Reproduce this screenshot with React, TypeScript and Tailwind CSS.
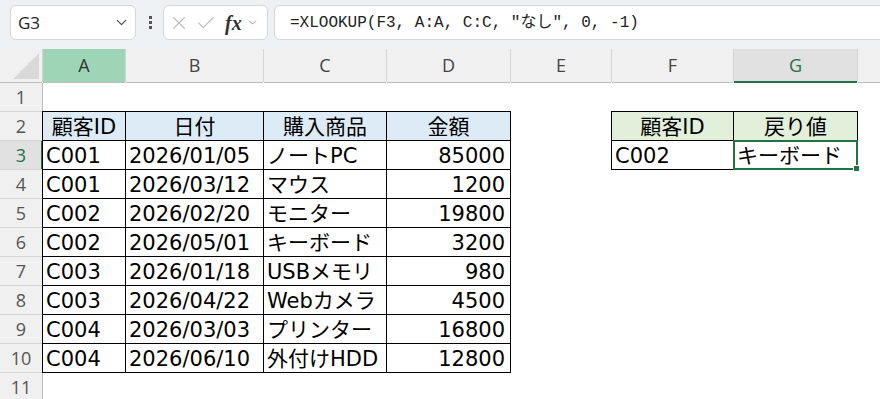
import { ChevronDown, X, Check } from "lucide-react";

type Cell = {
  v: string;
  align?: "l" | "r" | "c";
  head?: "blue" | "green";
  table?: boolean;
};

const cols = ["A", "B", "C", "D", "E", "F", "G", "H"];

const leftRows = [
  ["C001", "2026/01/05", "ノートPC", "85000"],
  ["C001", "2026/03/12", "マウス", "1200"],
  ["C002", "2026/02/20", "モニター", "19800"],
  ["C002", "2026/05/01", "キーボード", "3200"],
  ["C003", "2026/01/18", "USBメモリ", "980"],
  ["C003", "2026/04/22", "Webカメラ", "4500"],
  ["C004", "2026/03/03", "プリンター", "16800"],
  ["C004", "2026/06/10", "外付けHDD", "12800"],
];

function buildCells() {
  const cells: Record<string, Cell> = {};
  ["顧客ID", "日付", "購入商品", "金額"].forEach((h, i) => {
    cells[cols[i] + "2"] = { v: h, align: "c", head: "blue", table: true };
  });
  leftRows.forEach((r, ri) => {
    r.forEach((v, ci) => {
      cells[cols[ci] + (ri + 3)] = { v, align: ci === 3 ? "r" : "l", table: true };
    });
  });
  cells["F2"] = { v: "顧客ID", align: "c", head: "green", table: true };
  cells["G2"] = { v: "戻り値", align: "c", head: "green", table: true };
  cells["F3"] = { v: "C002", align: "l", table: true };
  cells["G3"] = { v: "キーボード", align: "l", table: true };
  return cells;
}

const cells = buildCells();

function TopBar() {
  return (
    <div className="flex items-start h-[49px] pt-[5px] pl-[10px] bg-[#edf1f4] overflow-hidden">
      <div className="flex items-center justify-between w-[126px] h-[35px] bg-white border border-[#d6d6d6] rounded-[6px] pl-[7px] pr-[5px]">
        <span className="text-[17px] text-[#242424] font-['Open_Sans',sans-serif]">G3</span>
        <ChevronDown size={17} strokeWidth={1.6} className="text-[#444]" />
      </div>
      <div className="flex flex-col items-center justify-center gap-[2px] w-[10px] h-[35px] ml-[9px]">
        <div className="w-[3px] h-[3px] bg-[#555]" />
        <div className="w-[3px] h-[3px] bg-[#555]" />
        <div className="w-[3px] h-[3px] bg-[#555]" />
      </div>
      <div className="flex items-center w-[105px] h-[35px] ml-[8px] bg-white border border-[#d6d6d6] rounded-[6px] pl-[4px]">
        <X size={22} strokeWidth={1.2} className="text-[#bdbdbd]" />
        <Check size={22} strokeWidth={1.2} className="text-[#bdbdbd] ml-[5px]" />
        <span className="ml-[8px] italic font-bold text-[20px] text-[#333] font-['Liberation_Serif',serif] leading-none">fx</span>
        <ChevronDown size={13} strokeWidth={1.5} className="text-[#888] ml-[4px]" />
      </div>
      <div className="flex items-center flex-1 h-[35px] ml-[6px] -mr-[20px] bg-white border border-[#d6d6d6] rounded-[6px] pl-[15px]">
        <span className="text-[16px] text-[#222] font-['Liberation_Mono','Noto_Sans_CJK_JP',monospace] whitespace-pre">
          =XLOOKUP(F3, A:A, C:C, "なし", 0, -1)
        </span>
      </div>
    </div>
  );
}

function DataCell({ id }: { id: string }) {
  const c = cells[id];
  const selected = id === "G3";
  let cls = "relative flex items-end pb-[1px] whitespace-nowrap leading-[24px] text-[21px] text-black";
  if (c?.head === "blue") cls += " bg-[#ddebf7]";
  else if (c?.head === "green") cls += " bg-[#e2efda]";
  else cls += " bg-white";
  if (c?.table) cls += " shadow-[0_0_0_1px_#000]";
  if (c?.align === "c") cls += " justify-center";
  else if (c?.align === "r") cls += " justify-end pr-[5px]";
  else cls += " pl-[3px]";
  return (
    <div className={cls}>
      {c ? <span>{c.v}</span> : null}
      {selected ? (
        <div className="absolute z-10 -inset-px border-2 border-[#217346]">
          <div className="absolute right-[-4px] bottom-[-4px] w-[7px] h-[7px] bg-[#217346] border border-white" />
        </div>
      ) : null}
    </div>
  );
}

function Sheet() {
  const rows = Array.from({ length: 11 }, (_, i) => i + 1);
  return (
    <div className="grid grid-cols-[42px_82px_137px_122px_123px_100px_121px_123px_1fr] grid-rows-[33px_repeat(11,28px)] gap-px bg-white font-['DejaVu_Sans','Noto_Sans_CJK_JP',sans-serif]">
      <div className="relative bg-[#f0f0f0] shadow-[1px_0_0_#d4d4d4,0_1px_0_#bdbdbd]">
        <svg className="absolute left-[12px] top-[3px]" width="28" height="28" viewBox="0 0 28 28">
          <polygon points="1,27 27,27 27,1" fill="#d9d9d9" />
        </svg>
      </div>
      {cols.map((c) => {
        let cls = "flex items-center justify-center text-[18px] font-['Open_Sans',sans-serif]";
        if (c === "A") cls += " bg-[#9fd5b7] text-[#333] shadow-[1px_0_0_#d4d4d4,0_1px_0_#bdbdbd]";
        else if (c === "G") cls += " bg-[#e1e1e1] text-[#217346] shadow-[inset_0_-1px_0_#217346,0_1px_0_#217346,1px_0_0_#d4d4d4]";
        else cls += " bg-[#f0f0f0] text-[#444] shadow-[1px_0_0_#d4d4d4,0_1px_0_#bdbdbd]";
        return (
          <div key={c} className={cls}>
            {c === "H" ? "" : c}
          </div>
        );
      })}
      {rows.map((r) => (
        <>
          <div
            key={"h" + r}
            className={
              r === 3
                ? "flex items-center justify-center text-[18px] font-['Open_Sans',sans-serif] bg-[#e1e1e1] text-[#217346] shadow-[inset_-1px_0_0_#217346,1px_0_0_#217346,0_1px_0_#d4d4d4]"
                : "flex items-center justify-center text-[18px] font-['Open_Sans',sans-serif] bg-[#f0f0f0] text-[#555] shadow-[1px_0_0_#bdbdbd,0_1px_0_#d4d4d4]"
            }
          >
            {r}
          </div>
          {cols.map((c) => (
            <DataCell key={c + r} id={c + r} />
          ))}
        </>
      ))}
    </div>
  );
}

export default function App() {
  return (
    <main className="w-[880px] h-[399px] overflow-hidden bg-white">
      <TopBar />
      <Sheet />
    </main>
  );
}
